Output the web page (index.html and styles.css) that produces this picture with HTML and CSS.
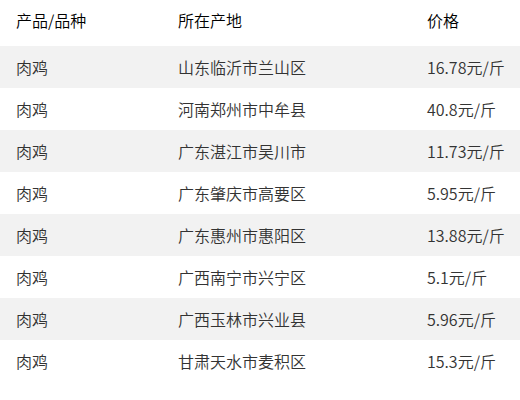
FILE: index.html
```html
<!DOCTYPE html>
<html lang="zh-CN">
<head>
<meta charset="utf-8">
<link rel="stylesheet" href="styles.css">
</head>
<body>
<div class="table">
  <div class="row head"><span>产品/品种</span><span>所在产地</span><span>价格</span></div>
  <div class="row odd"><span>肉鸡</span><span>山东临沂市兰山区</span><span>16.78元/斤</span></div>
  <div class="row"><span>肉鸡</span><span>河南郑州市中牟县</span><span>40.8元/斤</span></div>
  <div class="row odd"><span>肉鸡</span><span>广东湛江市吴川市</span><span>11.73元/斤</span></div>
  <div class="row"><span>肉鸡</span><span>广东肇庆市高要区</span><span>5.95元/斤</span></div>
  <div class="row odd"><span>肉鸡</span><span>广东惠州市惠阳区</span><span>13.88元/斤</span></div>
  <div class="row"><span>肉鸡</span><span>广西南宁市兴宁区</span><span>5.1元/斤</span></div>
  <div class="row odd"><span>肉鸡</span><span>广西玉林市兴业县</span><span>5.96元/斤</span></div>
  <div class="row"><span>肉鸡</span><span>甘肃天水市麦积区</span><span>15.3元/斤</span></div>
</div>
</body>
</html>
```
FILE: styles.css
```css
html, body {
  margin: 0;
  padding: 0;
  background: #fff;
}
body {
  font-family: "Noto Sans CJK SC", "Noto Sans", sans-serif;
  font-size: 16px;
  font-weight: 350;
  color: #333;
}
.table {
  display: flex;
  flex-direction: column;
}
.row {
  display: grid;
  grid-template-columns: 162px 249px 1fr;
  padding: 11px 0 11px 16px;
  line-height: 20px;
  white-space: nowrap;
}
.row.head {
  color: #000;
  padding: 10px 0 16px 16px;
}
.row.odd {
  background: #f2f2f2;
}
```
